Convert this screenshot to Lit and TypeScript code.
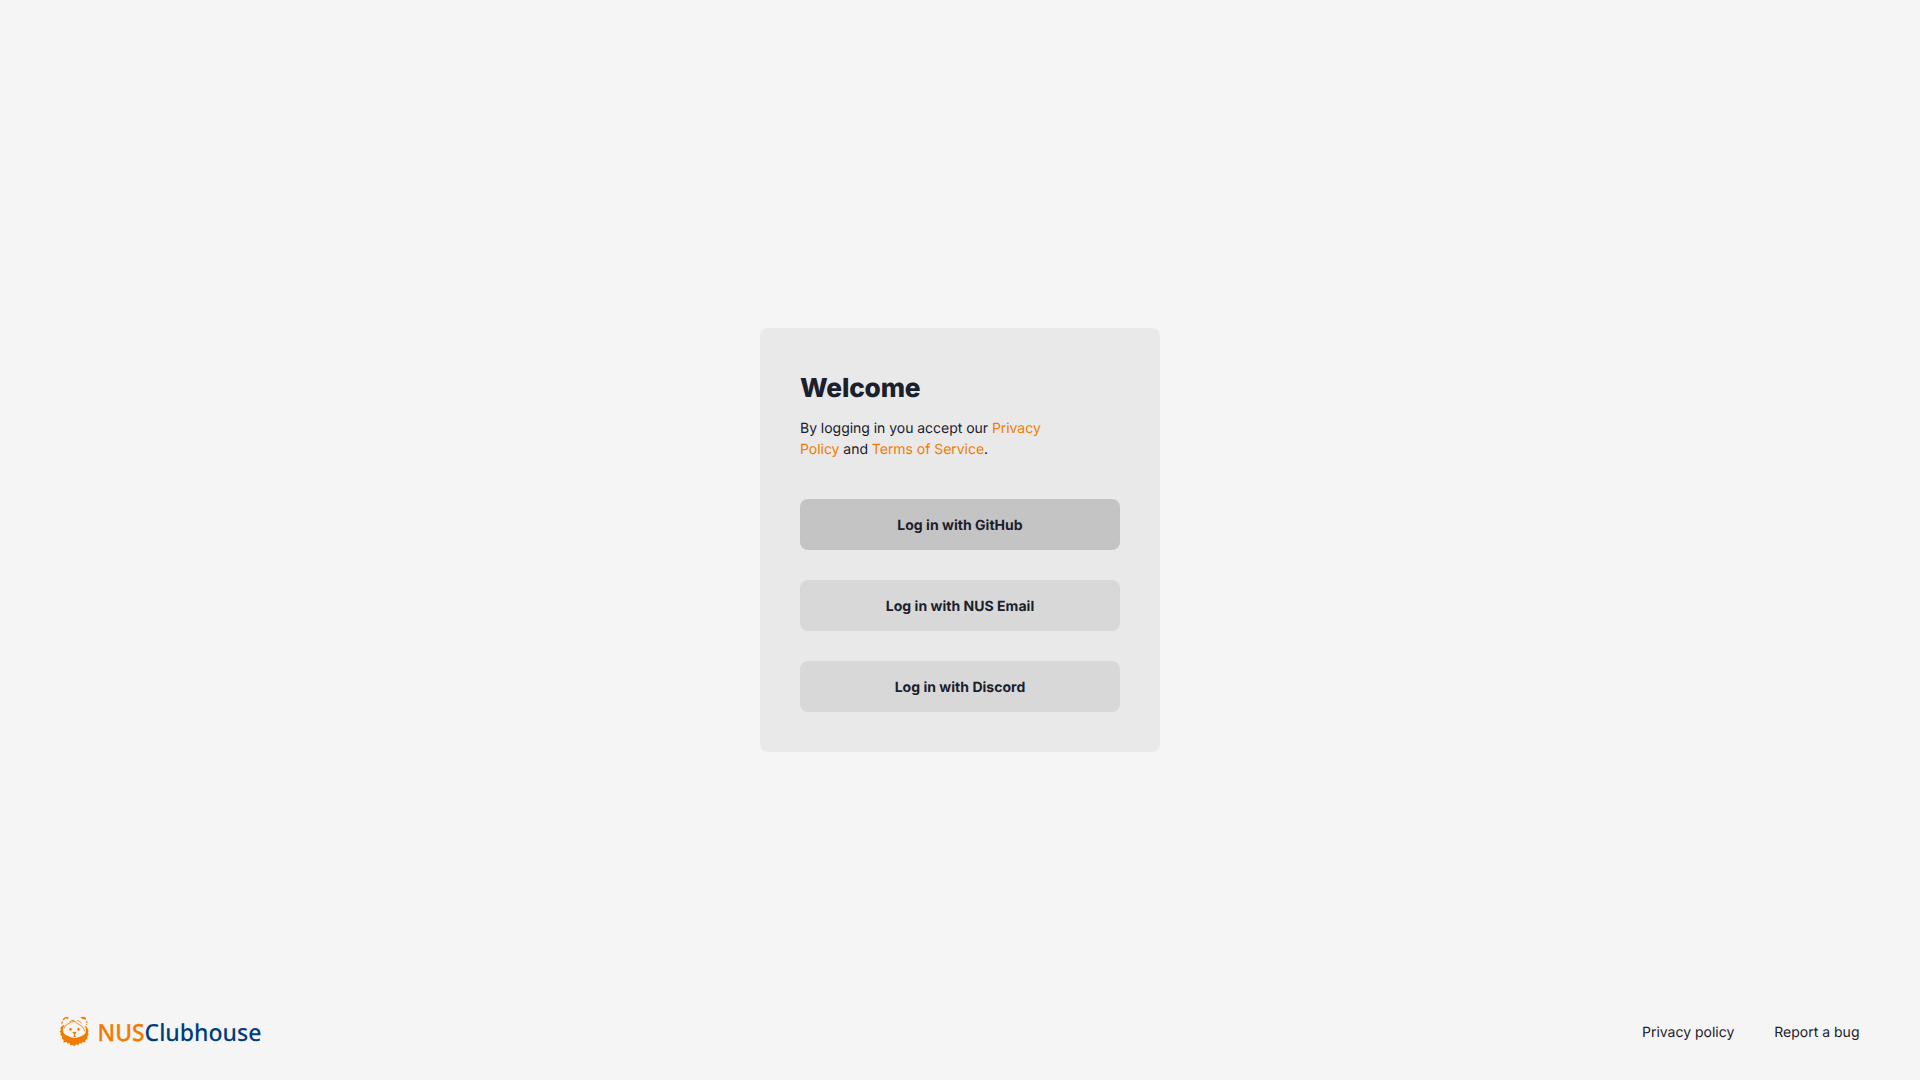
import { LitElement, html, css } from "lit";
import { customElement } from "lit/decorators.js";

@customElement("app-root")
export class AppRoot extends LitElement {
  static styles = css`
    :host {
      display: flex;
      flex-direction: column;
      box-sizing: border-box;
      height: 100vh;
      background: #f5f5f5;
      color: #1a202c;
      font: 400 14px/21px Inter, "Liberation Sans", sans-serif;
      letter-spacing: -0.035px;
      text-rendering: geometricPrecision;
    }
    main {
      height: 1080px;
      flex: 1 0 auto;
      display: grid;
      place-items: center;
    }
    .card {
      box-sizing: border-box;
      width: 400px;
      height: 424px;
      padding: 40px;
      border-radius: 8px;
      background: #e9e9e9;
      display: flex;
      flex-direction: column;
      align-items: stretch;
    }
    h1 {
      margin: 1px 0 0;
      font-size: 26.25px;
      line-height: 40px;
      font-weight: 800;
      letter-spacing: -0.18px;
    }
    p {
      margin: 9px 0 39px;
      width: 256px;
    }
    a {
      color: inherit;
      text-decoration: none;
    }
    p a {
      color: #ef7c00;
    }
    .actions {
      display: flex;
      flex-direction: column;
      gap: 30px;
    }
    button {
      box-sizing: border-box;
      height: 51px;
      padding: 2px 0 0;
      border: 0;
      border-radius: 8px;
      background: #d8d8d8;
      color: inherit;
      font: 700 14px/21px Inter, "Liberation Sans", sans-serif;
      letter-spacing: 0.03px;
      text-rendering: geometricPrecision;
    }
    .primary {
      background: #c4c4c4;
    }
    footer {
      box-sizing: border-box;
      height: 96px;
      margin-top: -96px;
      padding: 0 60px 0 59px;
      display: flex;
      justify-content: space-between;
      align-items: center;
    }
    nav {
      display: flex;
      gap: 40px;
      padding-top: 1px;
      letter-spacing: 0;
      padding-right: 0.5px;
    }
    .logo {
      display: block;
    }
    .word {
      font-family: "Noto Sans", "Open Sans", sans-serif;
      font-size: 23.5px;
      font-weight: 500;
      letter-spacing: 0;
    }
  `;

  render() {
    return html`
      <main>
        <section class="card">
          <h1>Welcome</h1>
          <p>By logging in you accept our <a href="#">Privacy Policy</a> and <a href="#">Terms of Service</a>.</p>
          <div class="actions">
            <button class="primary">Log in with GitHub</button>
            <button>Log in with NUS Email</button>
            <button>Log in with Discord</button>
          </div>
        </section>
      </main>
      <footer>
        <svg class="logo" width="206" height="32" viewBox="0 0 206 32" role="img">
          <svg x="0.2" width="31" height="31" viewBox="27 30 93 93" fill="#ef7c00">
            <path d="M37 42Q40 33 49 32L56 35L53 39L46 37L41 43ZM90 34Q98 30 105 34Q109 38 108 43L103 40L96 38Z" />
            <path d="M34 48L39 46L38 51L33 55ZM108 45L112 47L111 52L107 49ZM107 54L112 53L109 58Z" />
            <path fill="none" stroke="#ef7c00" stroke-width="2.5" d="M41 68Q43 57 53 54Q64 46 75 46Q78 53 88 56Q101 62 104 76M58 47Q65 42 72 43M81 44Q88 44 94 51" />
            <path d="M35 60L43 56L38 68L40 80Q43 86 52 89Q62 94 73 96Q86 94 96 89Q106 85 107 78L107 68L103 59L110 63L115 75L113 81L116 84L112 90L111 98L106 101L105 110L98 107L94 113L89 110L84 118L78 115L73 121L68 117L60 117L57 110L51 113L49 107L40 110L40 101L35 98L36 91L30 87L32 82L28 76L33 72L30 66Z" />
            <ellipse cx="61" cy="70" rx="3.5" ry="4.5" />
            <ellipse cx="85" cy="70" rx="3.5" ry="4.5" />
            <path d="M66 79Q73 75 79 79L74.5 85L74.5 89L78 91L73 93L68 91L71.5 89L71.5 85Z" />
          </svg>
          <text class="word" x="38.5" y="24.8" textLength="47" lengthAdjust="spacingAndGlyphs" fill="#ef7c00" stroke="#ef7c00" stroke-width="0.3">NUS</text>
          <text class="word" x="85.5" y="24.8" textLength="117" lengthAdjust="spacingAndGlyphs" fill="#003d7c">Clubhouse</text>
        </svg>
        <nav>
          <a href="#">Privacy policy</a>
          <a href="#">Report a bug</a>
        </nav>
      </footer>
    `;
  }
}
